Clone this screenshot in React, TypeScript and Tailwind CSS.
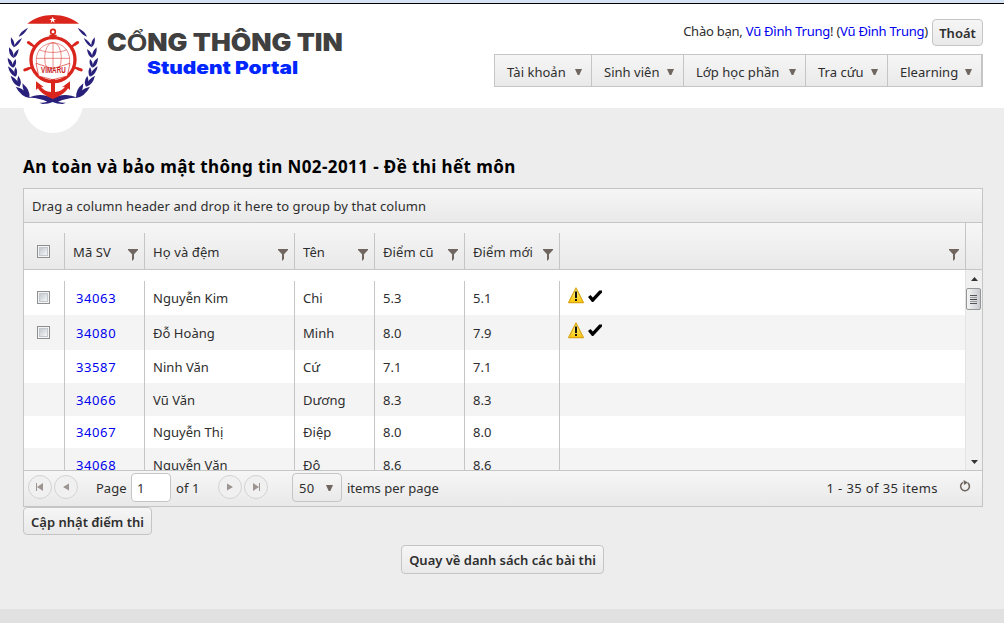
import React from "react";

// Each leaf: tip x, tip y, stem x, stem y, half width.
const leaves = [
  [84, 53, 56, 80, 6],
  [33, 82, 42, 112, 7],
  [66, 84, 41, 112, 6],
  [27, 112, 40, 144, 8],
  [56, 117, 40, 144, 7],
  [23, 143, 39, 173, 8],
  [47, 147, 40, 173, 7],
  [24, 169, 46, 200, 8],
  [47, 171, 47, 200, 7],
  [32, 197, 58, 230, 9],
  [55, 197, 59, 230, 8],
  [47, 230, 90, 264, 11],
  [67, 220, 88, 262, 10],
];

function leafPath([x1, y1, x2, y2, w]: number[]) {
  const len = Math.hypot(x2 - x1, y2 - y1);
  const nx = (-(y2 - y1) / len) * w * 1.3;
  const ny = ((x2 - x1) / len) * w * 1.3;
  const mx = x1 * 0.4 + x2 * 0.6;
  const my = y1 * 0.4 + y2 * 0.6;
  return `M${x1} ${y1}Q${mx + nx} ${my + ny} ${x2} ${y2}Q${mx - nx} ${my - ny} ${x1} ${y1}Z`;
}

const Leaves = () => (
  <g fill="#28207a">
    {leaves.map((l, i) => <path key={i} d={leafPath(l)} />)}
  </g>
);

function Logo() {
  const spokes = [-35, -145, 20, 160];
  return (
    <svg width="105" height="100" viewBox="0 0 315 300" className="absolute left-0 top-[10px]">
      <circle cx="158" cy="150" r="133" fill="#fff" />
      <path d="M82 41 C102 24 128 15 159 15 C190 15 216 24 237 41Z" fill="#da251d" />
      <path d="M158 20l3 7h7l-6 4 2 8-6-5-6 5 2-8-6-4h7z" fill="#fff" />
      <Leaves />
      <g transform="translate(317 0) scale(-1 1)"><Leaves /></g>
      <path d="M84 264 C112 250 140 254 158 265 C176 254 204 250 234 264 C214 262 194 268 174 275 C182 278 190 279 198 278 L188 282 C176 282 166 280 158 276 C150 280 140 282 128 282 L118 278 C126 279 134 278 142 275 C124 268 104 262 84 264Z" fill="#28207a" />
      <g stroke="#da251d" fill="none">
        {spokes.map((a) => (
          <g key={a} transform={`translate(159 149) rotate(${a})`}>
            <path d="M66 0H84" strokeWidth="7" />
            <path d="M80 0H90" strokeWidth="9" strokeLinecap="round" />
          </g>
        ))}
        <circle cx="159" cy="149" r="66" strokeWidth="10" fill="#fff" />
        <g strokeWidth="2" stroke="#e0524c">
          <circle cx="159" cy="149" r="50" />
          <ellipse cx="159" cy="143" rx="25" ry="46" />
          <path d="M159 97V190M109 145H209M117 119C142 130 176 130 201 119" />
        </g>
        <path d="M108 160L158 176L210 160L202 198L158 209L116 198Z" strokeWidth="2" fill="#fff" />
        <circle cx="159" cy="65" r="7" strokeWidth="5" />
        <path d="M148 77H170M159 72V88" strokeWidth="6" />
      </g>
      <path d="M153 208H165V246C178 245 189 239 195 230L186 232L210 214V240L204 235C194 251 178 259 159 267C140 259 124 251 114 235L108 240V214L132 232L123 230C129 239 140 245 153 246Z" fill="#da251d" />
      <text x="160" y="189" textAnchor="middle" fontSize="25" fontWeight="700" fill="#c8201c" textLength="74" lengthAdjust="spacingAndGlyphs" fontFamily="Liberation Sans, sans-serif">VIMARU</text>
    </svg>
  );
}

const Caret = () => (
  <svg width="7" height="6" viewBox="0 0 7 6" className="shrink-0"><path d="M0 0H7L4.3 6H2.7Z" fill="#70665f" /></svg>
);

const Funnel = () => (
  <svg width="11" height="12" viewBox="0 0 11 12" className="shrink-0"><path d="M0 0H10V1L6 5.2V10L4 12V5.2L0 1Z" fill="#70665f" /></svg>
);

const Check = () => (
  <span className="block h-[13px] w-[13px] border border-[#8e8f8f] bg-[#f4f4f4] p-px">
    <span className="block h-[9px] w-[9px] border border-[#c3c8cf] bg-linear-to-br from-[#c4cad1] to-[#f6f6f6]" />
  </span>
);

const Marks = () => (
  <span className="-mt-[5px] flex items-center gap-[3px]">
    <svg width="17" height="17" viewBox="0 0 17 17">
      <defs><linearGradient id="warn" x1="0" y1="0" x2="0" y2="1"><stop offset="0" stopColor="#fffa9a" /><stop offset="1" stopColor="#fcc60a" /></linearGradient></defs>
      <path d="M8 1L15.4 15.6H0.6Z" fill="url(#warn)" stroke="#dba617" strokeWidth="1.2" strokeLinejoin="round" />
      <path d="M7 4.5H9V11H7ZM7 12H9V14H7Z" fill="#111" />
    </svg>
    <svg width="14" height="14" viewBox="0 0 14 14"><path d="M0 8L2.5 6L4.8 8.6L11.3 1.6H14V3.5L5.2 13H4Z" fill="#000" /></svg>
  </span>
);

const menu = [
  { label: "Tài khoản", cls: "w-[97px]" },
  { label: "Sinh viên", cls: "w-[92px]" },
  { label: "Lớp học phần", cls: "w-[122px]" },
  { label: "Tra cứu", cls: "w-[82px]" },
  { label: "Elearning", cls: "w-[93px]" },
];

const cols = ["w-[41px]", "w-[80px]", "w-[150px]", "w-[80px]", "w-[90px]", "w-[95px]"];
const heads = ["", "Mã SV", "Họ và đệm", "Tên", "Điểm cũ", "Điểm mới"];

const rows = [
  { c: ["34063", "Nguyễn Kim", "Chi", "5.3", "5.1"], edit: true, h: "h-[45px] pt-[11px] bg-white" },
  { c: ["34080", "Đỗ Hoàng", "Minh", "8.0", "7.9"], edit: true, h: "h-[35px] bg-[#f4f4f4]" },
  { c: ["33587", "Ninh Văn", "Cứ", "7.1", "7.1"], edit: false, h: "h-[33px] bg-white" },
  { c: ["34066", "Vũ Văn", "Dương", "8.3", "8.3"], edit: false, h: "h-[33px] bg-[#f4f4f4]" },
  { c: ["34067", "Nguyễn Thị", "Điệp", "8.0", "8.0"], edit: false, h: "h-[32px] bg-white" },
  { c: ["34068", "Nguyễn Văn", "Đô", "8.6", "8.6"], edit: false, h: "h-[34px] bg-[#f4f4f4]" },
];

const Nav = ({ d }: { d: string }) => (
  <span className="flex h-6 w-6 items-center justify-center rounded-full border border-[#d3d3d3] bg-[#f0f0f0]">
    <svg width="8" height="8" viewBox="0 0 8 8"><path d={d} fill="#9b9490" /></svg>
  </span>
);

const grad = "bg-linear-to-b from-[#f6f6f6] to-[#e9e9e9]";
const btn = "rounded-[4px] border border-[#c5c5c5] bg-linear-to-b from-[#f6f6f6] to-[#e9e9e9] font-semibold text-[#2e2e2e] flex items-center justify-center whitespace-nowrap";

export default function App() {
  return (
    <div className="flex h-[623px] w-[1004px] flex-col overflow-hidden bg-[#ededed] font-['Noto_Sans',sans-serif] text-[13px] leading-[18px] text-[#2e2e2e]">
      <div className="h-[4px] shrink-0 border-b border-black bg-[#d5e3f5]" />
      <header className="relative flex h-[104px] shrink-0 justify-between bg-white">
        <div className="absolute left-[23px] top-[69px] h-[60px] w-[60px] rounded-full bg-white" />
        <div className="absolute left-0 -top-[4px]"><Logo /></div>
        <div className="ml-[107px] mt-[25px] w-[240px] whitespace-nowrap font-['Inter',sans-serif] font-black">
          <div className="origin-left scale-x-[1.1] text-[24px] leading-[27px] text-[#404040]">C<span className="font-['Liberation_Sans'] font-bold">Ổ</span>NG THÔNG TIN</div>
          <div className="ml-[40px] origin-left scale-x-[1.16] text-[18px] leading-[24px] text-[#0026ff]">Student Portal</div>
        </div>
        <div className="mr-[21px] flex flex-col items-end">
          <div className="flex pt-[15px]">
            <div className="mr-[4px] mt-[3px] whitespace-nowrap tracking-[-0.24px]">Chào bạn, <span className="text-[#0000ee]">Vũ Đình Trung</span>! (<span className="text-[#0000ee]">Vũ Đình Trung</span>)</div>
            <button className={`${btn} h-[27px] w-[51px]`}>Thoát</button>
          </div>
          <nav className={`mt-[8px] flex h-[33px] border border-r-2 border-[#c5c5c5] ${grad}`}>
            {menu.map((m, i) => (
              <div key={m.label} className={`flex items-center justify-between pl-3 pr-[9px] pt-[3px] ${m.cls} ${i < 4 ? "border-r border-[#c5c5c5]" : ""}`}>
                <span className="whitespace-nowrap tracking-[0.02px]">{m.label}</span><Caret />
              </div>
            ))}
          </nav>
        </div>
      </header>
      <main className="flex flex-col px-[23px] pt-[47px]">
        <h1 className="h-[33px] whitespace-nowrap text-[17px] font-bold leading-[24px] tracking-[0.4px] text-black">An toàn và bảo mật thông tin N02-2011 - Đề thi hết môn</h1>
        <section className="w-[960px] border border-[#c5c5c5]">
          <div className={`flex h-[34px] items-center border-b border-[#c5c5c5] px-2 ${grad}`}>
            <span className="tracking-[0.08px]">Drag a column header and drop it here to group by that column</span>
          </div>
          <div className={`flex h-[47px] border-b border-[#c5c5c5] ${grad}`}>
            <div className="flex w-[942px] border-r border-[#c5c5c5] pt-[10px]">
              {heads.map((h, i) => (
                <div key={h} className={`flex items-center justify-between border-r border-[#c5c5c5] pr-[6px] ${cols[i]} ${i === 0 ? "pl-[13px]" : "pl-2"}`}>
                  {i === 0 ? <Check /> : <><span className="whitespace-nowrap pt-[2px] tracking-[0.1px]">{h}</span><span className="-mr-px pt-[7px]"><Funnel /></span></>}
                </div>
              ))}
              <div className="flex flex-1 items-center justify-end pr-[5px] pt-[7px]"><Funnel /></div>
            </div>
          </div>
          <div className="flex h-[201px] overflow-hidden border-b border-[#c5c5c5]">
            <div className="w-[941px]">
              {rows.map((r) => (
                <div key={r.c[0]} className={`flex ${r.h}`}>
                  <div className={`flex items-center border-r border-[#c5c5c5] pl-[13px] ${cols[0]}`}>{r.edit && <span className="-mt-px"><Check /></span>}</div>
                  {r.c.map((v, i) => (
                    <div key={i} className={`flex items-center whitespace-nowrap border-r border-[#c5c5c5] ${cols[i + 1]} ${i === 0 ? "pl-[11px] tracking-[0.6px] text-[#0000ee]" : "pl-2 tracking-[0.04px]"}`}>{v}</div>
                  ))}
                  <div className="flex items-center pl-2">{r.edit && <Marks />}</div>
                </div>
              ))}
            </div>
            <div className="flex w-[17px] flex-col items-center border-l border-[#e3e3e3] bg-[#f0f0f0] pt-[7px]">
              <svg width="7" height="4"><path d="M0 4L3.5 0L7 4Z" fill="#333" /></svg>
              <div className="-ml-px mt-[7px] flex h-[22px] w-[15px] flex-col items-center justify-center rounded-[2px] border border-[#959595] bg-linear-to-r from-[#f5f5f5] to-[#c9cbd0]">
                <i className="h-px w-[7px] bg-[#555]" /><i className="mt-px h-px w-[7px] bg-[#999]" /><i className="mt-px h-px w-[7px] bg-[#444]" /><i className="mt-px h-px w-[7px] bg-[#999]" /><i className="mt-px h-px w-[7px] bg-[#555]" />
              </div>
              <svg width="7" height="4" className="mt-[150px]"><path d="M0 0L3.5 4L7 0Z" fill="#333" /></svg>
            </div>
          </div>
          <div className={`flex h-[35px] items-center px-1 pb-[2px] ${grad}`}>
            <div className="flex w-[68px] gap-[2px] pb-px"><Nav d="M0 0H1V8H0ZM7 0V8L1 4Z" /><Nav d="M7 0.5V7.5L1 4Z" /></div>
            <span className="w-[35px]">Page</span>
            <span className="flex h-[29px] w-[40px] items-center rounded-[4px] border border-[#c5c5c5] bg-white pl-[5px]">1</span>
            <span className="w-[47px] pl-[5px] tracking-[0.1px]">of 1</span>
            <div className="flex w-[74px] gap-[2px] pb-px"><Nav d="M1 0.5V7.5L7 4Z" /><Nav d="M7 0H8V8H7ZM1 0V8L7 4Z" /></div>
            <span className={`flex h-[29px] w-[50px] items-center justify-between rounded-[4px] border border-[#c5c5c5] pl-[6px] pr-[8px] tracking-[0.4px] ${grad}`}>50<Caret /></span>
            <span className="pl-[5px]">items per page</span>
            <span className="ml-auto mr-[21px] tracking-[0.4px]">1 - 35 of 35 items</span>
            <svg width="12" height="12" viewBox="0 0 12 12" className="mb-[4px] mr-[7px]"><path d="M4 2.4A4.4 4.4 0 1 0 8.8 2.9" fill="none" stroke="#70665f" strokeWidth="1.6" /><path d="M4.5 0L9 2.5L5 5Z" fill="#70665f" /></svg>
          </div>
        </section>
        <button className={`${btn} h-[28px] w-[129px] pt-[2px]`}>Cập nhật điểm thi</button>
        <button className={`${btn} ml-[378px] mt-[10px] h-[29px] w-[203px]`}>Quay về danh sách các bài thi</button>
      </main>
      <footer className="mt-auto h-[14px] shrink-0 bg-[#e1e1e1]" />
    </div>
  );
}
